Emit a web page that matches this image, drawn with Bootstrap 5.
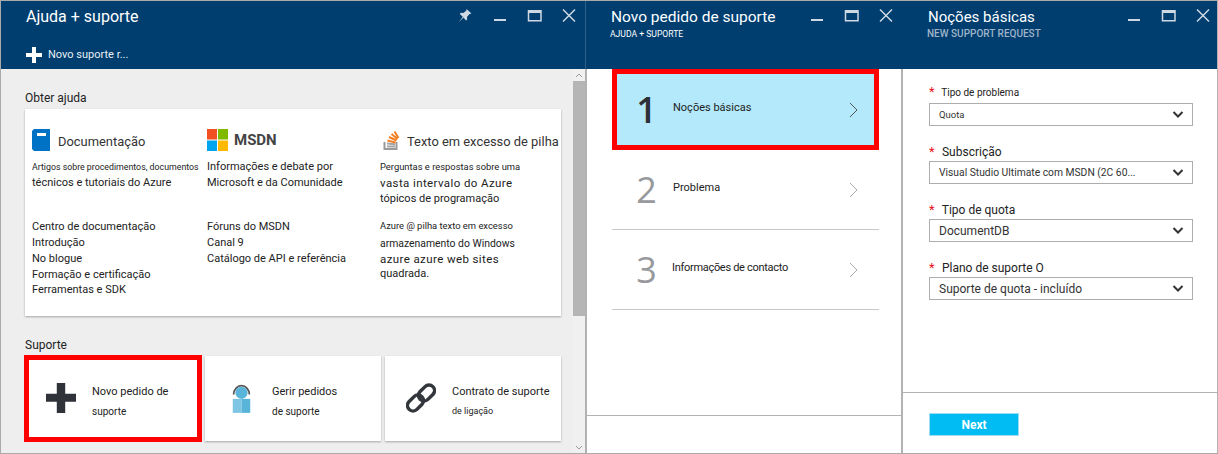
<!DOCTYPE html>
<html lang="pt">
<head>
  <meta charset="UTF-8" />
  <title>Ajuda + suporte</title>
  <link href="https://cdn.jsdelivr.net/npm/bootstrap@5.3.3/dist/css/bootstrap.min.css" rel="stylesheet">
  <script src="https://cdn.jsdelivr.net/npm/bootstrap@5.3.3/dist/js/bootstrap.bundle.min.js"></script>
  <style>
    html, body { height: 454px; overflow: hidden; }
    body { font-family: Roboto, "Liberation Sans", sans-serif; font-size: 12px; color: #222; background: #fff; }
    svg { flex: none; }
    .desk { height: 454px; border: 1px solid #aaa; border-right: 0; }

    /* blades */
    .blade { min-width: 0; }
    .blade-a { width: 584px; }
    .blade-b { width: 318px; border-left: 2px solid #b2b2b2; border-right: 2px solid #b2b2b2; }
    .blade-c { width: 315px; border-right: 1px solid #b2b2b2; }
    .blade-head { height: 68px; background: #003e70; color: #fff; position: relative; flex: none; }
    .blade-b .blade-head { margin: 0 -2px; border-left: 1px solid #2f6088; }
    .head-title { font-size: 16px; line-height: 22px; padding-top: 5px; padding-left: 25px; }
    .blade-b .head-title { font-size: 15.500px; padding-left: 25px; }
    .blade-c .head-title { font-size: 15px; padding-left: 25px; }
    .head-sub { font-size: 8.600px; line-height: 10px; padding-left: 24px; margin-top: 1px; }
    .head-sub-dim { color: #9fb4c8; font-weight: 500; font-size: 10px; padding-left: 24px; }
    .head-tools { position: absolute; top: 7px; right: 8px; height: 16px; gap: 18px; }
    .blade-b .head-tools { right: 9px; }
    .blade-c .head-tools { right: 6px; }
    .tool { display: block; fill: none; stroke: #cfd9e3; }
    .cmd { font-size: 11px; color: #e8eef3; gap: 6px; padding: 19px 0 0 25px; }

    /* left blade */
    .scroll-body { background: #eee; min-height: 0; }
    .scroll-main { padding: 21px 0 0 24px; }
    .fake-bar { width: 12px; background: #f0f0f0; flex: none; }
    .bar-arrow { height: 12px; }
    .bar-thumb { height: 235px; background: #b5b5b5; }
    .sec-label { font-size: 12px; line-height: 16px; color: #222; margin-bottom: 3px; }
    .sec-label-2 { margin-top: 21px; }
    .help-card { background: #fff; height: 207px; width: 536px; box-shadow: 0 1px 2px rgba(0,0,0,.3); padding: 20px 0 0 7px; }
    .help-col { width: 175px; flex: none; }
    .help-col-2 { width: 173px; }
    .help-col-3 { width: 178px; }
    .help-head { height: 22px; font-size: 12.900px; color: #333; white-space: nowrap; margin-bottom: 8px; }
    .help-head span { margin-top: 3px; }
    .help-head-ms { gap: 6px; }
    .help-head-so { gap: 7px; padding-left: 3px; }
    .msdn-word { font-weight: 700; font-size: 15px; color: #444; }
    .help-head .msdn-word { margin-top: 0; }
    .ln { line-height: 16px; font-size: 11px; white-space: nowrap; color: #222; }
    .ln-xs { font-size: 8.800px; }
    .ln-s { font-size: 9.400px; }
    .ln-w { letter-spacing: .4px; font-size: 11.500px; }
    .ln-arm { font-size: 10.400px; margin-top: 2px; }
    .ln-short { line-height: 14px; }
    .gap-links { margin-top: 28px; }
    .gap-links-3 { margin-top: 11px; }
    .tile { background: #fff; width: 176px; height: 85px; box-shadow: 0 1px 2px rgba(0,0,0,.3); flex: none; }
    .tile-hit { outline: 5px solid #f00; outline-offset: -4px; box-shadow: none; }
    .tile-ico { width: 67px; flex: none; padding-left: 5px; margin-top: -1px; }
    .tile-txt { padding-top: 3px; }
    .tile-t { font-size: 11px; line-height: 22px; white-space: nowrap; }
    .tile-s { font-size: 10px; line-height: 17px; white-space: nowrap; }
    .tile-xs { font-size: 9px; }

    /* middle blade */
    .step-list { padding-left: 25px; }
    .step { height: 80px; width: 267px; border-bottom: 1px solid #c8c8c8; flex: none; }
    .step-num { width: 61px; font-family: "Open Sans", sans-serif; font-size: 36px; line-height: 40px; color: #97999c; text-align: center; padding-left: 8px; flex: none; }
    .step-name { font-size: 11px; margin-top: -3px; color: #222; }
    .step-name-long { letter-spacing: -.3px; margin-left: -1px; }
    .step-go { margin-right: 21px; }
    .step-on { height: 81px; background: #b3e9fa; outline: 5px solid #f00; outline-offset: -5px; border-bottom: 0; }
    .step-on .step-num { color: #2d2f36; font-weight: 600; }
    .blade-foot { height: 38px; border-top: 1px solid #b2b2b2; flex: none; }

    /* right blade */
    .fld-list { padding: 16px 0 0 26px; }
    .fld { height: 58px; width: 264px; }
    .fld-label { font-size: 12px; line-height: 18px; height: 18px; color: #222; white-space: nowrap; }
    .fld-label-s { font-size: 10px; line-height: 14px; }
    .req { color: #e81123; width: 10px; display: inline-block; font-size: 13px; }
    .form-select.pick { height: 23px; border: 1px solid #adadad; border-radius: 0; padding: 1px 24px 0 9px; font-size: 12px; color: #333;
      background-position: right 8px center; background-size: 12px 9px;
      background-image: url("data:image/svg+xml,%3csvg xmlns='http://www.w3.org/2000/svg' viewBox='0 0 12 9'%3e%3cpath fill='none' stroke='%23333' stroke-width='2' d='M1.5 2l4.5 4.5L10.5 2'/%3e%3c/svg%3e"); }
    .form-select.pick-s { font-size: 9.500px; }
    .form-select.pick-m { font-size: 10.300px; }
    .foot-c { height: 61px; border-top: 1px solid #b2b2b2; flex: none; padding: 20px 0 0 26px; }
    .next-btn { width: 90px; height: 23px; background: #00bcf2; color: #fff; border: 1px solid #9fdcef; border-radius: 0; font-size: 12px; font-weight: 700; line-height: 20px; padding: 0; }
  </style>
</head>
<body>
<div class="desk d-flex">

  <section class="blade blade-a d-flex flex-column">
    <div class="blade-head">
      <div class="head-title">Ajuda + suporte</div>
      <div class="head-tools d-flex">
        <svg class="tool" width="16" height="16" viewBox="2 0 16 16"><path fill="#cfd9e3" stroke="none" d="M9.500 1l5 4.500-2 .5-2.500 3 .2 2.500-1.200 1L6.500 9.500 2 14l3.800-5.200L2.800 6l1-1.200 2.500.2 3-2.300z"/></svg>
        <svg class="tool" width="16" height="16" viewBox="0 0 16 16"><path stroke-width="2" d="M1 12h12"/></svg>
        <svg class="tool" width="16" height="16" viewBox="0 0 16 16"><path stroke-width="1.500" d="M1.500 2.700h12.500v10H1.500z"/><path stroke-width="2" d="M1.500 4h12.500"/></svg>
        <svg class="tool" width="16" height="16" viewBox="0 0 16 16"><path stroke-width="1.500" d="M2 1.500l12 12M14 1.500l-12 12"/></svg>
      </div>
      <div class="cmd d-flex align-items-center">
        <svg width="16" height="16" viewBox="0 0 16 16"><path fill="#fff" d="M6 0h4v6h6v4h-6v6H6v-6H0V6h6z"/></svg>
        <span>Novo suporte r...</span>
      </div>
    </div>
    <div class="scroll-body flex-grow-1 d-flex">
      <div class="scroll-main flex-grow-1">
        <div class="sec-label">Obter ajuda</div>
        <div class="help-card d-flex">
          <div class="help-col">
            <div class="help-head d-flex align-items-center gap-2">
              <svg width="18" height="22" viewBox="0 0 18 22"><path fill="#0072c6" d="M0 2l2-2h16v22H2l-2-2z"/><path fill="#fff" d="M5 4h9v3H5z"/></svg>
              <span>Documentação</span>
            </div>
            <div class="ln ln-xs">Artigos sobre procedimentos, documentos</div>
            <div class="ln">técnicos e tutoriais do Azure</div>
            <div class="ln gap-links">Centro de documentação</div>
            <div class="ln">Introdução</div>
            <div class="ln">No blogue</div>
            <div class="ln">Formação e certificação</div>
            <div class="ln ln-short">Ferramentas e SDK</div>
          </div>
          <div class="help-col help-col-2">
            <div class="help-head help-head-ms d-flex align-items-center">
              <svg width="21" height="22" viewBox="0 0 21 22"><path fill="#f25022" d="M0 0h10v10.500H0z"/><path fill="#7fba00" d="M11 0h10v10.500H11z"/><path fill="#00a4ef" d="M0 11.500h10V22H0z"/><path fill="#ffb900" d="M11 11.500h10V22H11z"/></svg>
              <span class="msdn-word">MSDN</span>
            </div>
            <div class="ln">Informações e debate por</div>
            <div class="ln">Microsoft e da Comunidade</div>
            <div class="ln gap-links">Fóruns do MSDN</div>
            <div class="ln">Canal 9</div>
            <div class="ln">Catálogo de API e referência</div>
          </div>
          <div class="help-col help-col-3">
            <div class="help-head help-head-so d-flex align-items-center">
              <svg width="17" height="22" viewBox="0 0 17 22"><path fill="none" stroke="#9a9a9a" stroke-width="2" d="M1.500 13v7h12v-7"/><path stroke="#a5a5a5" stroke-width="2" d="M4 17.500h8M4 14.500l8 .8"/><path stroke="#f48024" stroke-width="2" fill="none" d="M4.500 11.500l8 2M6 8l7.500 3.500M8.500 5l6 5M11.500 2.500l4 6.500"/></svg>
              <span>Texto em excesso de pilha</span>
            </div>
            <div class="ln ln-s">Perguntas e respostas sobre uma</div>
            <div class="ln ln-w">vasta intervalo do Azure</div>
            <div class="ln">tópicos de programação</div>
            <div class="ln ln-s gap-links-3">Azure @ pilha texto em excesso</div>
            <div class="ln ln-arm">armazenamento do Windows</div>
            <div class="ln ln-w ln-short">azure azure web sites</div>
            <div class="ln">quadrada.</div>
          </div>
        </div>
        <div class="sec-label sec-label-2">Suporte</div>
        <div class="d-flex gap-1">
          <div class="tile tile-hit d-flex align-items-center">
            <div class="tile-ico d-flex justify-content-center"><svg width="30" height="30" viewBox="0 0 32 32"><path fill="#2f3238" d="M11.500 0h9v11.500H32v8.500H20.500v12h-9V20H0v-8.500h11.500z"/></svg></div>
            <div class="tile-txt"><div class="tile-t">Novo pedido de</div><div class="tile-s">suporte</div></div>
          </div>
          <div class="tile d-flex align-items-center">
            <div class="tile-ico d-flex justify-content-center"><svg width="21" height="30" viewBox="0 0 24 34"><path fill="none" stroke="#555" stroke-width="2" d="M3 13a9 10 0 1 1 18 0"/><circle cx="12" cy="11" r="7" fill="#59b4d9"/><path fill="#7fc6e4" d="M2 18h10v16H2z"/><path fill="#59b4d9" d="M12 18h10v16H12z"/></svg></div>
            <div class="tile-txt"><div class="tile-t">Gerir pedidos</div><div class="tile-s">de suporte</div></div>
          </div>
          <div class="tile d-flex align-items-center">
            <div class="tile-ico d-flex justify-content-center"><svg width="30" height="30" viewBox="0 0 30 30"><g fill="none" stroke="#33363b" stroke-width="3.500"><rect x="15" y="1" width="11" height="18" rx="5.500" transform="rotate(45 20.500 10)"/><rect x="4" y="11" width="11" height="18" rx="5.500" transform="rotate(45 9.500 20)"/></g></svg></div>
            <div class="tile-txt"><div class="tile-t">Contrato de suporte</div><div class="tile-s tile-xs">de ligação</div></div>
          </div>
        </div>
      </div>
      <div class="fake-bar d-flex flex-column">
        <div class="bar-arrow d-flex align-items-center justify-content-center"><svg width="8" height="5" viewBox="0 0 8 5"><path fill="none" stroke="#999" d="M1 4l3-3 3 3"/></svg></div>
        <div class="bar-thumb"></div>
        <div class="bar-arrow mt-auto d-flex align-items-center justify-content-center"><svg width="8" height="5" viewBox="0 0 8 5"><path fill="none" stroke="#999" d="M1 1l3 3 3-3"/></svg></div>
      </div>
    </div>
  </section>

  <section class="blade blade-b d-flex flex-column">
    <div class="blade-head">
      <div class="head-title">Novo pedido de suporte</div>
      <div class="head-sub">AJUDA + SUPORTE</div>
      <div class="head-tools d-flex">
        <svg class="tool" width="16" height="16" viewBox="0 0 16 16"><path stroke-width="2" d="M1 12h12"/></svg>
        <svg class="tool" width="16" height="16" viewBox="0 0 16 16"><path stroke-width="1.500" d="M1.500 2.700h12.500v10H1.500z"/><path stroke-width="2" d="M1.500 4h12.500"/></svg>
        <svg class="tool" width="16" height="16" viewBox="0 0 16 16"><path stroke-width="1.500" d="M2 1.500l12 12M14 1.500l-12 12"/></svg>
      </div>
    </div>
    <div class="step-list flex-grow-1 d-flex flex-column">
      <div class="step step-on d-flex align-items-center">
        <div class="step-num">1</div><div class="step-name flex-grow-1">Noções básicas</div>
        <svg class="step-go" width="9" height="16" viewBox="0 0 9 16"><path fill="none" stroke="#555" d="M1 1l7 7-7 7"/></svg>
      </div>
      <div class="step d-flex align-items-center">
        <div class="step-num">2</div><div class="step-name flex-grow-1">Problema</div>
        <svg class="step-go" width="9" height="16" viewBox="0 0 9 16"><path fill="none" stroke="#aaa" d="M1 1l7 7-7 7"/></svg>
      </div>
      <div class="step d-flex align-items-center">
        <div class="step-num">3</div><div class="step-name step-name-long flex-grow-1">Informações de contacto</div>
        <svg class="step-go" width="9" height="16" viewBox="0 0 9 16"><path fill="none" stroke="#aaa" d="M1 1l7 7-7 7"/></svg>
      </div>
    </div>
    <div class="blade-foot"></div>
  </section>

  <section class="blade blade-c d-flex flex-column">
    <div class="blade-head">
      <div class="head-title">Noções básicas</div>
      <div class="head-sub head-sub-dim">NEW SUPPORT REQUEST</div>
      <div class="head-tools d-flex">
        <svg class="tool" width="16" height="16" viewBox="0 0 16 16"><path stroke-width="2" d="M1 12h12"/></svg>
        <svg class="tool" width="16" height="16" viewBox="0 0 16 16"><path stroke-width="1.500" d="M1.500 2.700h12.500v10H1.500z"/><path stroke-width="2" d="M1.500 4h12.500"/></svg>
        <svg class="tool" width="16" height="16" viewBox="0 0 16 16"><path stroke-width="1.500" d="M2 1.500l12 12M14 1.500l-12 12"/></svg>
      </div>
    </div>
    <div class="fld-list flex-grow-1">
      <div class="fld">
        <div class="fld-label fld-label-s"><span class="req">*</span> Tipo de problema</div>
        <select class="form-select pick pick-s"><option>Quota</option></select>
      </div>
      <div class="fld">
        <div class="fld-label"><span class="req">*</span> Subscrição</div>
        <select class="form-select pick pick-m"><option>Visual Studio Ultimate com MSDN (2C 60...</option></select>
      </div>
      <div class="fld">
        <div class="fld-label"><span class="req">*</span> Tipo de quota</div>
        <select class="form-select pick"><option>DocumentDB</option></select>
      </div>
      <div class="fld">
        <div class="fld-label"><span class="req">*</span> Plano de suporte O</div>
        <select class="form-select pick"><option>Suporte de quota - incluído</option></select>
      </div>
    </div>
    <div class="foot-c">
      <button class="btn next-btn" type="button">Next</button>
    </div>
  </section>

</div>
</body>
</html>
